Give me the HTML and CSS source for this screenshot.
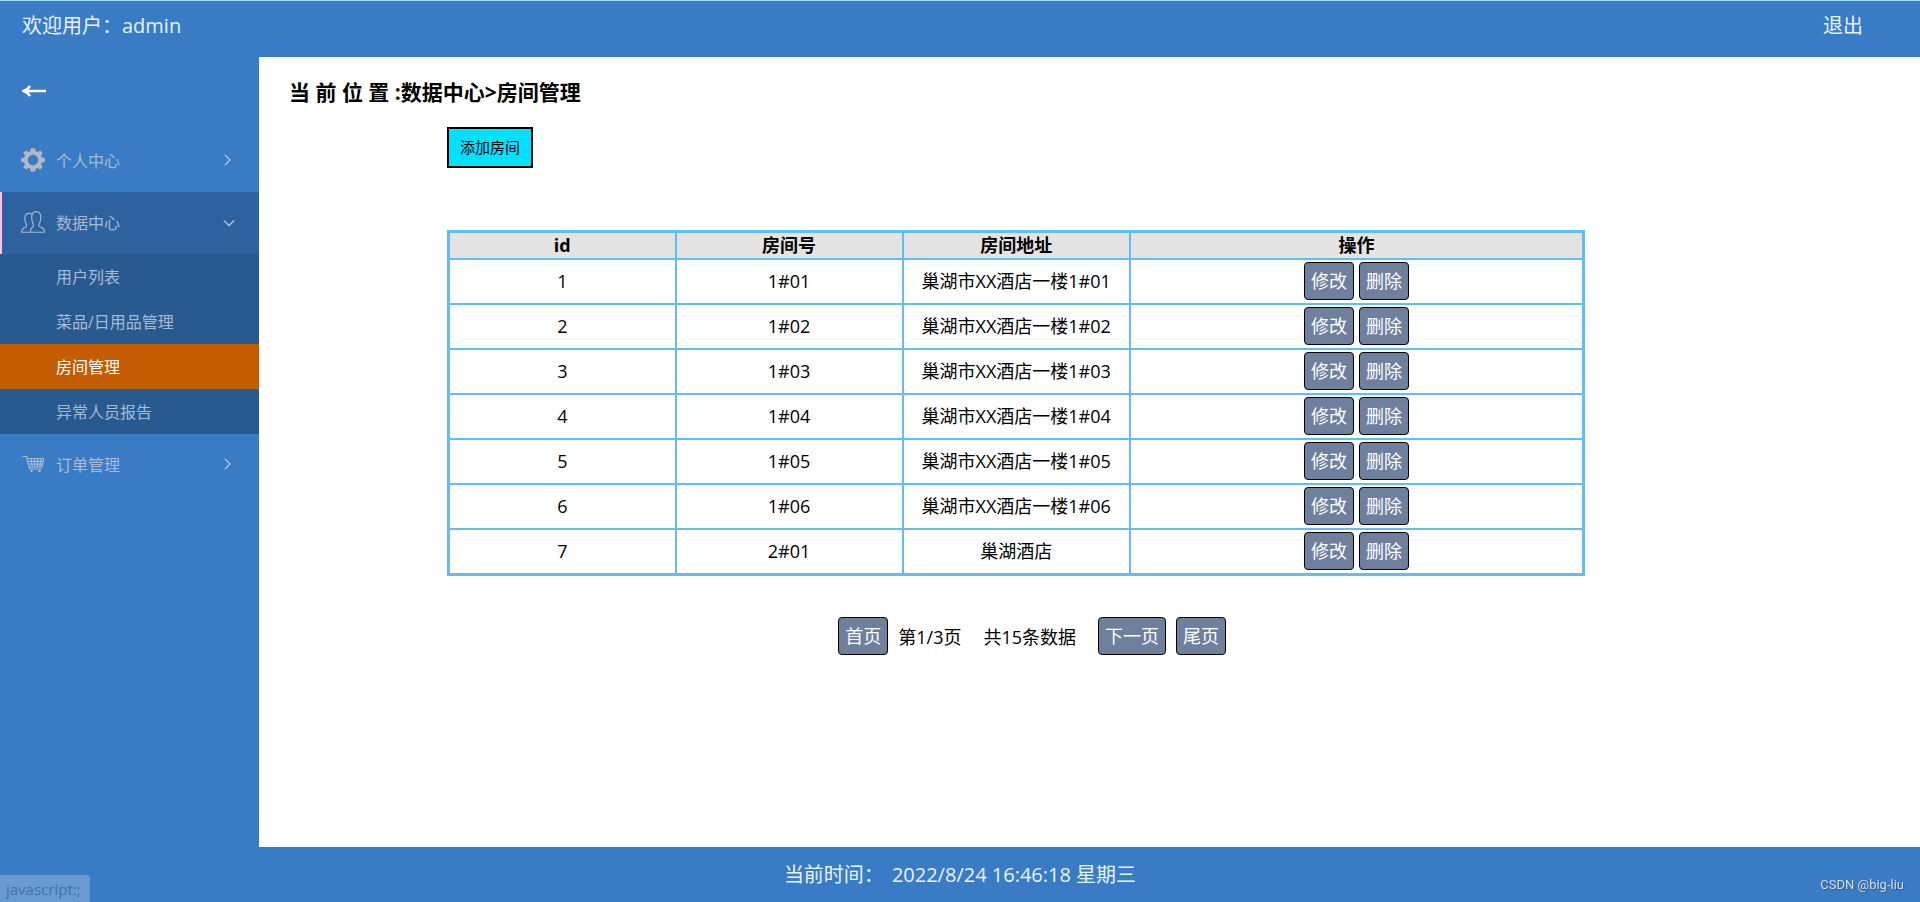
FILE: index.html
```html
<!DOCTYPE html>
<html lang="zh-CN">
<head>
<meta charset="utf-8">
<title>房间管理</title>
<link rel="stylesheet" href="styles.css">
</head>
<body>
<div class="app">
  <header class="topbar">
    <span>欢迎用户：admin</span>
    <a class="logout" href="#">退出</a>
  </header>
  <aside class="sidebar">
    <button class="collapse" type="button" aria-label="收起菜单">
      <svg width="24" height="14" viewBox="0 0 24 14" fill="none" stroke="#fff" stroke-width="2.4"><path d="M24 7H1.5M8 1.8C6.4 4.6 4.4 6.2 1.4 7C4.4 7.8 6.4 9.4 8 12.2"/></svg>
    </button>
    <nav>
      <a class="menu-item" href="#">
        <svg class="icon" viewBox="0 0 24 24"><path fill="#b3b9c4" fill-rule="evenodd" d="M10 .3h4l.7 3 1.8.8 2.7-1.7 2.5 2.5-1.7 2.7.8 1.8 3 .7v3.8l-3 .7-.8 1.8 1.7 2.7-2.5 2.5-2.7-1.7-1.8.8-.7 3h-4l-.7-3-1.8-.8-2.7 1.7-2.5-2.5 1.7-2.7-.8-1.8-3-.7v-3.8l3-.7.8-1.8-1.7-2.7 2.5-2.5 2.7 1.7 1.8-.8zM12 6.8a5.2 5.2 0 1 0 0 10.4a5.2 5.2 0 0 0 0-10.4z"/></svg>
        <span>个人中心</span>
        <svg class="chevron" viewBox="0 0 12 12"><path d="M2 1L7 6L2 11"/></svg>
      </a>
      <a class="menu-item open" href="#">
        <svg class="icon" viewBox="0 0 24 24" fill="none" stroke="#a7bad3" stroke-width="1.1"><path d="M9.6 22.3H23.4C23.5 19.500 22.800 18.700 20.800 17.800C18.700 16.900 17.700 16.600 17.800 15.200C17.900 14 19.800 12.300 19.800 7.600C19.800 3.500 18.600 1.600 15.300 1.600C12 1.600 10.700 3.500 10.700 7.600C10.700 12.300 12.500 14 12.600 15.200C12.700 16.600 11.900 17 10.900 17.800C9.700 18.800 9.300 19.600 9.600 22.300ZM9.500 22.300H.6C.6 19.500 1.200 18.900 3 18C4.900 17.100 5.800 16.600 5.600 15.300C5.400 14.100 3.800 12.600 3.800 8.700C3.800 4.900 5.300 3.400 8.200 3.400C9.400 3.400 10.300 3.700 11 4.300"/></svg>
        <span>数据中心</span>
        <svg class="chevron" viewBox="0 0 12 12"><path d="M1 4.500L6 9.500L11 4.500"/></svg>
      </a>
      <div class="submenu">
        <a href="#">用户列表</a>
        <a href="#">菜品/日用品管理</a>
        <a class="current" href="#">房间管理</a>
        <a href="#">异常人员报告</a>
      </div>
      <a class="menu-item" href="#">
        <svg class="icon" viewBox="0 0 24 24" fill="none" stroke="#a9b9cf" stroke-width="1.2"><path d="M1.500 4.500H5.500L8.500 17H20.500M6.300 6.500H22.700L20.800 15H8.100M6.800 9.300H22M7.500 12.100H21.500M10.100 6.500L11.300 15M13.500 6.500L13.900 15M16.800 6.500L16.500 15M20 6.500L18.800 15"/><path d="M9.500 19h2M17.500 19h2" stroke-width="2"/></svg>
        <span>订单管理</span>
        <svg class="chevron" viewBox="0 0 12 12"><path d="M2 1L7 6L2 11"/></svg>
      </a>
    </nav>
  </aside>
  <main class="content">
    <h1>当 前 位 置 :数据中心&gt;房间管理</h1>
    <div class="panel">
      <button class="add" type="button">添加房间</button>
      <table>
        <thead><tr><th>id</th><th>房间号</th><th>房间地址</th><th class="ops">操作</th></tr></thead>
        <tbody>
          <tr><td>1</td><td>1#01</td><td>巢湖市XX酒店一楼1#01</td><td><div class="actions"><button class="btn" type="button">修改</button><button class="btn" type="button">删除</button></div></td></tr>
          <tr><td>2</td><td>1#02</td><td>巢湖市XX酒店一楼1#02</td><td><div class="actions"><button class="btn" type="button">修改</button><button class="btn" type="button">删除</button></div></td></tr>
          <tr><td>3</td><td>1#03</td><td>巢湖市XX酒店一楼1#03</td><td><div class="actions"><button class="btn" type="button">修改</button><button class="btn" type="button">删除</button></div></td></tr>
          <tr><td>4</td><td>1#04</td><td>巢湖市XX酒店一楼1#04</td><td><div class="actions"><button class="btn" type="button">修改</button><button class="btn" type="button">删除</button></div></td></tr>
          <tr><td>5</td><td>1#05</td><td>巢湖市XX酒店一楼1#05</td><td><div class="actions"><button class="btn" type="button">修改</button><button class="btn" type="button">删除</button></div></td></tr>
          <tr><td>6</td><td>1#06</td><td>巢湖市XX酒店一楼1#06</td><td><div class="actions"><button class="btn" type="button">修改</button><button class="btn" type="button">删除</button></div></td></tr>
          <tr><td>7</td><td>2#01</td><td>巢湖酒店</td><td><div class="actions"><button class="btn" type="button">修改</button><button class="btn" type="button">删除</button></div></td></tr>
        </tbody>
      </table>
      <div class="pager">
        <button class="btn" type="button">首页</button>
        <span>第1/3页</span>
        <span class="total">共15条数据</span>
        <button class="btn" type="button">下一页</button>
        <button class="btn" type="button">尾页</button>
      </div>
    </div>
  </main>
  <footer class="footer"><span>当前时间：</span><span>2022/8/24 16:46:18 星期三</span></footer>
</div>
<div class="status">javascript:;</div>
<div class="credit">CSDN @big-liu</div>
</body>
</html>
```
FILE: styles.css
```css
* {
  box-sizing: border-box;
}

body {
  margin: 0;
  font-family: "Open Sans", "Noto Sans CJK SC", sans-serif;
  font-size: 18px;
  color: #000;
  background: #fff;
}

a {
  color: inherit;
  text-decoration: none;
}

button {
  font-family: inherit;
  cursor: pointer;
}

.app {
  display: grid;
  grid-template: auto 1fr auto / 259px 1fr;
  min-height: 100vh;
}

.topbar {
  grid-column: 1 / -1;
  display: flex;
  justify-content: space-between;
  padding: 10px 57px 16px 22px;
  border-top: 1px solid #a9daf0;
  background: #3a7bc5;
  color: #e8f4ff;
  font-size: 20px;
  line-height: 30px;
}

.sidebar {
  background: #3a7bc5;
  color: #a9bbd3;
  font-size: 16px;
}

.collapse {
  display: flex;
  align-items: center;
  width: 100%;
  height: 73px;
  padding: 0 22px 5px;
  border: 0;
  background: none;
}

.menu-item {
  display: flex;
  align-items: center;
  gap: 11px;
  height: 62px;
  padding: 0 24px 2px 21px;
}

.menu-item.open {
  padding-left: 19px;
  border-left: 2px solid #ffc0ee;
  background: #2e629f;
}

.icon {
  width: 24px;
  height: 24px;
}

.chevron {
  width: 12px;
  height: 12px;
  margin-left: auto;
  fill: none;
  stroke: #b0c6e2;
  stroke-width: 1.3;
}

.submenu {
  background: #28598f;
}

.submenu a {
  display: block;
  padding: 1px 0 0 56px;
  line-height: 44px;
}

.submenu .current {
  background: #c55c02;
  color: #fff;
}

.content {
  padding: 19px 30px;
}

h1 {
  margin: 0;
  font-size: 21px;
  line-height: 32px;
}

.panel {
  width: 71.1%;
  margin: 19px 0 0 158px;
}

.add {
  display: block;
  height: 41px;
  padding: 0 11px 2px;
  border: 2px solid #000;
  background: #00e0ff;
  color: #000;
  font-size: 15px;
}

table {
  width: 100%;
  margin-top: 62px;
  border: 3px solid #63bdf0;
  border-collapse: collapse;
  table-layout: fixed;
  text-align: center;
}

th,
td {
  padding: 0;
  border: 2px solid #63bdf0;
}

th {
  height: 27px;
  background: #e4e4e4;
  line-height: 24px;
}

.ops {
  width: 40%;
}

td {
  height: 45px;
  line-height: 24px;
}

tr:last-child td {
  height: 46px;
}

.actions {
  display: flex;
  justify-content: center;
  gap: 5px;
  padding-bottom: 1px;
}

.btn {
  height: 38px;
  padding: 0 6px;
  border: 1px solid #000;
  border-radius: 4px;
  background: #6f809e;
  color: #fff;
  font-size: 18px;
  line-height: 24px;
}

.pager {
  display: flex;
  align-items: center;
  justify-content: center;
  gap: 10px;
  margin: 41px 0 0 32px;
}

.total {
  margin: 0 12px;
}

.footer {
  grid-column: 1 / -1;
  display: flex;
  justify-content: center;
  gap: 8px;
  padding: 13px 0 12px;
  background: #3a7bc5;
  color: #e8f4ff;
  font-size: 20px;
  line-height: 30px;
}

.status {
  position: fixed;
  left: 0;
  bottom: 0;
  padding: 2px 9px 1px 6px;
  border-top-right-radius: 4px;
  background: #6a9ad2;
  color: #4071ad;
  font-size: 15px;
  line-height: 24px;
}

.credit {
  position: fixed;
  right: 16px;
  bottom: 8px;
  color: #d5dde8;
  font-family: Roboto, sans-serif;
  font-size: 13px;
  line-height: 18px;
  text-shadow: 1px 1px 1px #35557c;
}
```
